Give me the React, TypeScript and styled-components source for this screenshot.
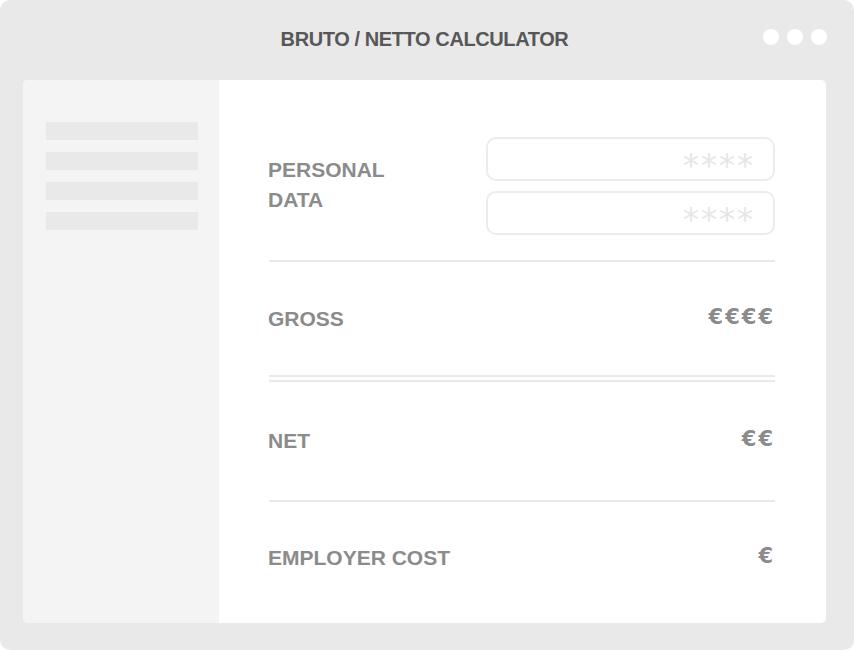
import React from "react";
import styled, { createGlobalStyle } from "styled-components";

const GlobalStyle = createGlobalStyle`
  html, body {
    margin: 0;
    padding: 0;
    background: #fff;
  }
  body {
    font-family: "Liberation Sans", Arial, sans-serif;
  }
`;

const Frame = styled.div`
  width: 854px;
  height: 650px;
  box-sizing: border-box;
  background: #e9e9e9;
  border-radius: 10px;
  display: flex;
  flex-direction: column;
  padding: 0 28px 27px 23px;
`;

const TitleBar = styled.div`
  height: 80px;
  display: grid;
  grid-template-columns: 1fr auto 1fr;
  align-items: center;
`;

const Title = styled.div`
  grid-column: 2;
  font-size: 20px;
  font-weight: 700;
  letter-spacing: -0.4px;
  color: #575757;
  padding-bottom: 2px;
`;

const Dots = styled.div`
  justify-self: end;
  display: flex;
  gap: 8px;
  margin-right: -1px;
  padding-bottom: 6px;
`;

const Dot = styled.span`
  width: 16px;
  height: 16px;
  border-radius: 50%;
  background: #fff;
`;

const Card = styled.div`
  flex: 1;
  display: flex;
  border-radius: 5px;
  overflow: hidden;
  background: #fff;
`;

const Sidebar = styled.div`
  width: 196px;
  background: #f4f4f4;
  padding: 42px 0 0 23px;
  box-sizing: border-box;
  display: flex;
  flex-direction: column;
  gap: 12px;
`;

const SideBar = styled.div`
  width: 152px;
  height: 18px;
  background: #e9e9e9;
`;

const Main = styled.div`
  flex: 1;
  padding: 57px 51px 0 49px;
  display: flex;
  flex-direction: column;
`;

const PersonalRow = styled.div`
  display: flex;
  justify-content: space-between;
  align-items: flex-start;
  padding-bottom: 25px;
`;

const Label = styled.div`
  font-size: 21px;
  font-weight: 700;
  color: #8b8b8b;
  line-height: 30px;
`;

const PersonalLabel = styled(Label)`
  padding-top: 18px;
`;

const Inputs = styled.div`
  display: flex;
  flex-direction: column;
  gap: 10px;
`;

const Field = styled.div`
  width: 289px;
  height: 44px;
  box-sizing: border-box;
  border: 2px solid #ececec;
  border-radius: 10px;
  display: flex;
  align-items: center;
  justify-content: flex-end;
  padding: 0 20px 0 0;
  font-family: "DejaVu Sans", sans-serif;
  font-size: 32px;
  letter-spacing: 2px;
  color: #e6e6e6;
  line-height: 1;
`;

const Stars = styled.span`
  display: block;
  padding-top: 12px;
  margin-right: -2px;
`;

const Divider = styled.div<{ $double?: boolean }>`
  height: 2px;
  margin-left: 1px;
  background: #e9e9e9;
  ${(p) =>
    p.$double &&
    `
    height: 7px;
    background: linear-gradient(#e9e9e9 0 2px, transparent 2px 5px, #e9e9e9 5px 7px);
  `}
`;

const ResultRow = styled.div<{ $h: number }>`
  height: ${(p) => p.$h}px;
  display: flex;
  align-items: center;
  justify-content: space-between;
`;

const Value = styled.div`
  font-family: "DejaVu Sans", sans-serif;
  font-size: 21px;
  font-weight: 700;
  color: #8b8b8b;
  letter-spacing: 2px;
  margin-right: 0;
  margin-bottom: 4px;
`;

const rows = [
  { label: "GROSS", value: "€€€€", h: 113, after: "double" },
  { label: "NET", value: "€€", h: 118, after: "single" },
  { label: "EMPLOYER COST", value: "€", h: 112, after: "" },
];

export default function App() {
  return (
    <>
      <GlobalStyle />
      <Frame>
        <TitleBar>
          <Title>BRUTO / NETTO CALCULATOR</Title>
          <Dots>
            <Dot />
            <Dot />
            <Dot />
          </Dots>
        </TitleBar>
        <Card>
          <Sidebar>
            <SideBar />
            <SideBar />
            <SideBar />
            <SideBar />
          </Sidebar>
          <Main>
            <PersonalRow>
              <PersonalLabel>
                PERSONAL
                <br />
                DATA
              </PersonalLabel>
              <Inputs>
                <Field>
                  <Stars>****</Stars>
                </Field>
                <Field>
                  <Stars>****</Stars>
                </Field>
              </Inputs>
            </PersonalRow>
            <Divider />
            {rows.map((r) => (
              <React.Fragment key={r.label}>
                <ResultRow $h={r.h}>
                  <Label>{r.label}</Label>
                  <Value>{r.value}</Value>
                </ResultRow>
                {r.after && <Divider $double={r.after === "double"} />}
              </React.Fragment>
            ))}
          </Main>
        </Card>
      </Frame>
    </>
  );
}
